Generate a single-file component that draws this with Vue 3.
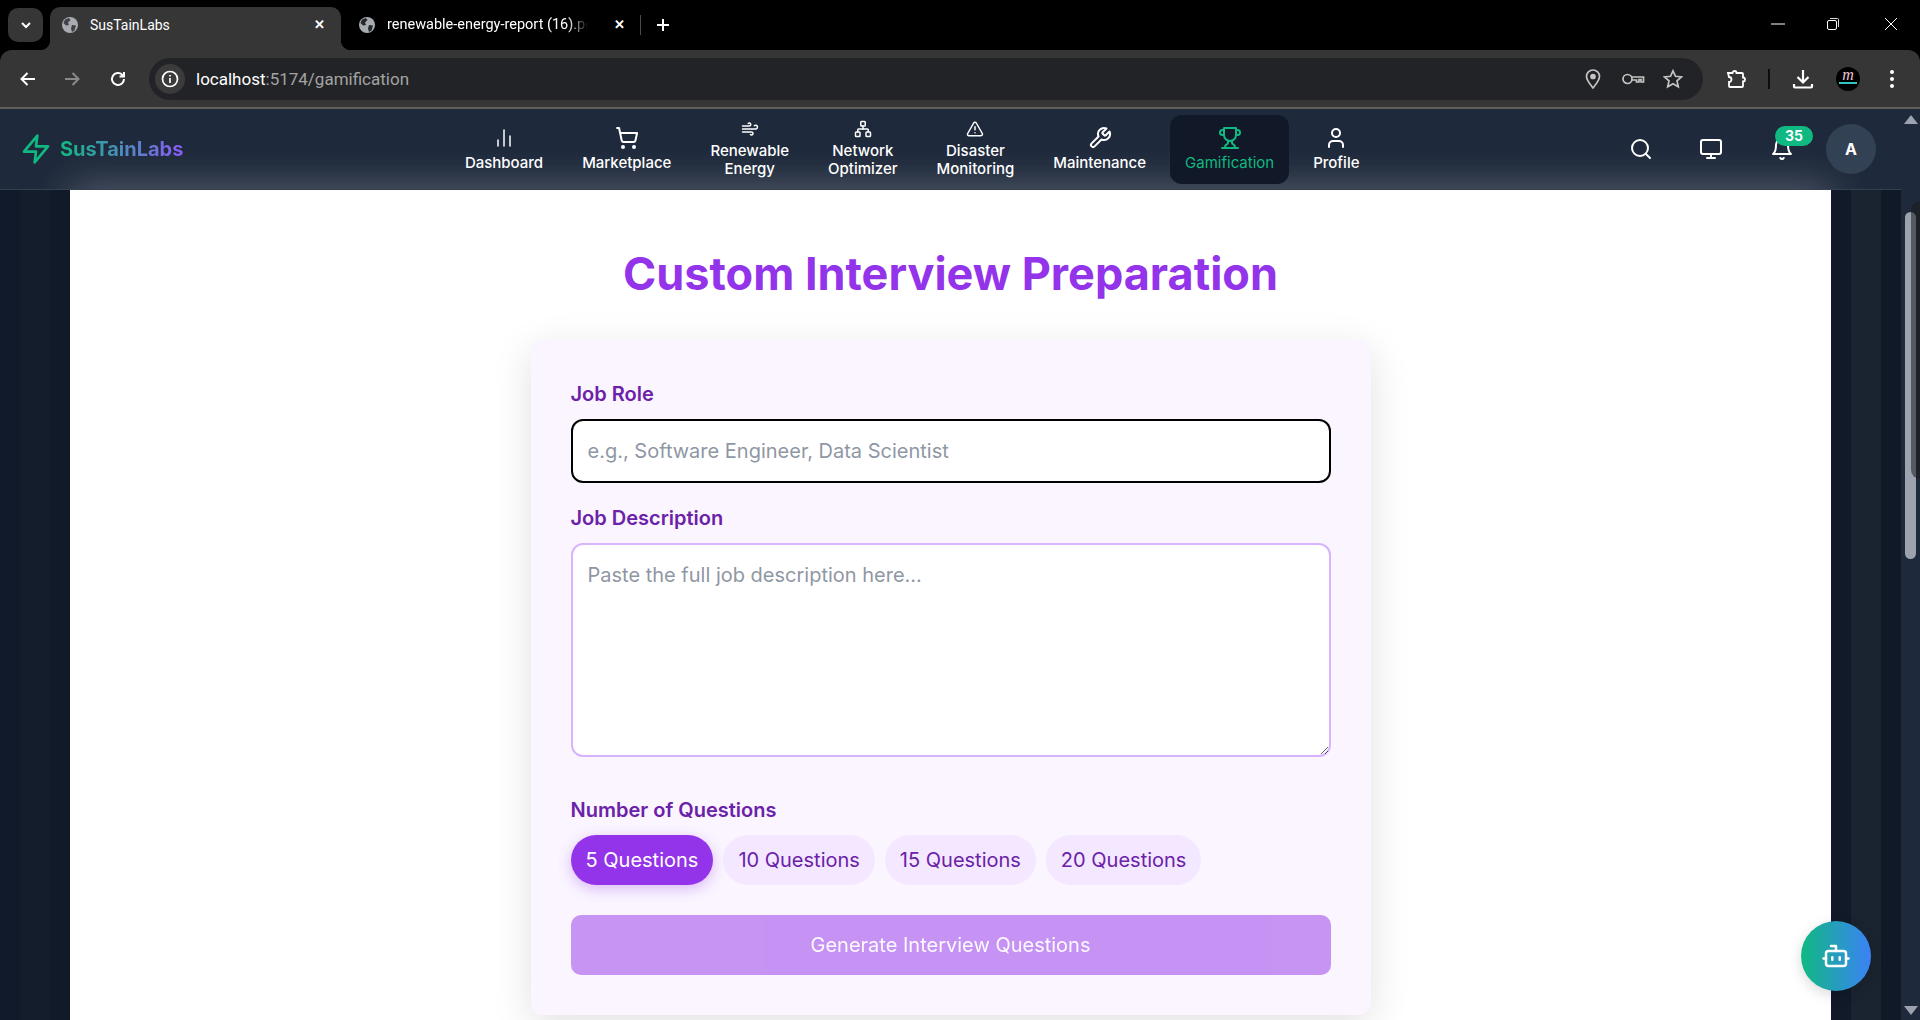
<template>
  <div class="window">
    <div class="tabstrip">
      <button class="tab-search">
        <svg width="14" height="14" viewBox="0 0 14 14"><path d="M3 5l4 4 4-4" class="chrome-line" /></svg>
      </button>
      <div class="tab active">
        <svg class="favicon" width="16" height="16" viewBox="0 0 16 16"><circle cx="8" cy="8" r="8" fill="#a8abaf" /><path d="M3 2.5 7 1l1.5 2L6 5.5 7 8 4 8.5 1.5 6zM10 8l4 .5-1.5 5-2.5 1.500-1-3.500z" fill="#3f4246" /></svg>
        <span class="tab-title">SusTainLabs</span>
        <span class="tab-close">✕</span>
      </div>
      <div class="tab">
        <svg class="favicon" width="16" height="16" viewBox="0 0 16 16"><circle cx="8" cy="8" r="8" fill="#a8abaf" /><path d="M3 2.5 7 1l1.5 2L6 5.5 7 8 4 8.5 1.5 6zM10 8l4 .5-1.5 5-2.5 1.500-1-3.500z" fill="#26282b" /></svg>
        <span class="tab-title fade">renewable-energy-report (16).pdf</span>
        <span class="tab-close">✕</span>
      </div>
      <span class="tab-divider"></span>
      <svg class="new-tab" width="16" height="16" viewBox="0 0 16 16"><path d="M8 2v12M2 8h12" class="chrome-line" /></svg>
      <div class="win-controls">
        <svg class="minimize" width="14" height="14" viewBox="0 0 14 14"><path d="M0 7h14" stroke="#fff" stroke-width="1" /></svg>
        <svg width="14" height="14" viewBox="0 0 14 14" fill="none" stroke="#ddd"><rect x="1.5" y="3.5" width="9" height="9" rx="1.5" stroke="#fff" /><path d="M4 1.5h7.5a1 1 0 0 1 1 1V10" /></svg>
        <svg width="14" height="14" viewBox="0 0 14 14"><path d="M1 1l12 12M13 1 1 13" stroke="#fff" stroke-width="1" /></svg>
      </div>
    </div>

    <div class="toolbar">
      <svg class="tool" width="20" height="20" viewBox="0 0 20 20"><path d="M17 10H4M9.5 4 3.5 10l6 6" class="chrome-line" /></svg>
      <svg class="tool" width="20" height="20" viewBox="0 0 20 20"><path d="M3 10h13M10.5 4l6 6-6 6" class="chrome-line dim" /></svg>
      <svg class="tool reload" width="20" height="20" viewBox="0 0 20 20"><path d="M16 10a6 6 0 1 1-1.8-4.3L16 7.500M16 3v4.500h-4.500" class="chrome-line" /></svg>
      <div class="omnibox">
        <span class="site-info">
          <svg width="18" height="18" viewBox="0 0 18 18" fill="none" stroke="#fff" stroke-width="1.700"><circle cx="9" cy="9" r="7.500" /><path d="M9 8v5M9 5v1.500" /></svg>
        </span>
        <span class="url"><b>localhost</b>:5174/gamification</span>
        <svg class="omni-icon" width="20" height="22" viewBox="0 0 20 22" fill="none" stroke="#c4c4c4" stroke-width="1.700"><path d="M10 20C6 15 3.500 12 3.500 8.500a6.500 6.500 0 0 1 13 0C16.500 12 14 15 10 20z" /><circle cx="10" cy="8.500" r="2" fill="#c4c4c4" /></svg>
        <svg class="omni-icon" width="24" height="16" viewBox="0 0 24 16" fill="none" stroke="#c4c4c4" stroke-width="1.700"><circle cx="6.500" cy="8" r="4.500" /><path d="M11 6h11.500v5H20V8.500h-2V11h-2.500V9H11" /></svg>
        <svg class="omni-icon" width="20" height="20" viewBox="0 0 20 20" fill="none" stroke="#c4c4c4" stroke-width="1.700"><path d="m10 1.800 2.500 5.500 6 .6-4.500 4 1.300 5.900L10 14.800 4.700 17.800 6 11.900l-4.500-4 6-.6z" /></svg>
      </div>
      <svg class="ext" width="20" height="20" viewBox="0 0 20 20" fill="none" stroke="#fff" stroke-width="1.800"><path d="M2 4h4.500a2 2 0 0 1 4 0H16a1 1 0 0 1 1 1v3.500a2 2 0 0 1 0 4V17a1 1 0 0 1-1 1H4a1 1 0 0 1-1-1v-4a2.500 2.500 0 0 0 0-5z" /></svg>
      <span class="tool-divider"></span>
      <svg class="dl" width="22" height="22" viewBox="0 0 22 22" fill="none" stroke="#fff" stroke-width="2.200"><path d="M11 2v12M5.500 9l5.500 5.500L16.500 9M2 16v2.500a1 1 0 0 0 1 1h16a1 1 0 0 0 1-1V16" /></svg>
      <span class="chrome-avatar">m</span>
      <svg class="menu-dots" width="6" height="20" viewBox="0 0 6 20" fill="#fff"><circle cx="3" cy="3" r="2" /><circle cx="3" cy="10" r="2" /><circle cx="3" cy="17" r="2" /></svg>
    </div>

    <div class="viewport">
      <div class="site">
        <nav class="navbar">
          <div class="logo">
            <svg width="32" height="32" viewBox="0 0 24 24" fill="none" stroke="#10b981" stroke-width="2" stroke-linecap="round" stroke-linejoin="round"><path d="M13 2 3 14h9l-1 8 10-12h-9z" /></svg>
            <span class="logo-text">SusTainLabs</span>
          </div>

          <div class="menu">
            <a v-for="item in navItems" :key="item.label" class="menu-item" :class="{ current: item.active }">
              <svg
                :width="item.small ? 18 : 24"
                :height="item.small ? 18 : 24"
                viewBox="0 0 24 24"
                class="line-icon"
                :class="{ thin: item.thin }"
              >
                <path v-for="d in item.paths" :key="d" :d="d" />
              </svg>
              <span class="menu-label">{{ item.label }}</span>
            </a>
          </div>

          <div class="nav-right">
            <svg width="24" height="24" viewBox="0 0 24 24" class="line-icon search"><path v-for="d in searchIcon" :key="d" :d="d" /></svg>
            <svg width="24" height="24" viewBox="0 0 24 24" class="line-icon"><path v-for="d in monitorIcon" :key="d" :d="d" /></svg>
            <div class="bell">
              <svg width="24" height="24" viewBox="0 0 24 24" class="line-icon"><path v-for="d in bellIcon" :key="d" :d="d" /></svg>
              <span class="badge">35</span>
            </div>
            <div class="avatar">A</div>
          </div>
        </nav>

        <main class="page">
          <h1 class="title">Custom Interview Preparation</h1>
          <section class="card">
            <label class="field-label">Job Role</label>
            <input class="field role" placeholder="e.g., Software Engineer, Data Scientist" />
            <label class="field-label second">Job Description</label>
            <textarea class="field desc" placeholder="Paste the full job description here..."></textarea>
            <label class="field-label third">Number of Questions</label>
            <div class="pills">
              <button
                v-for="n in questionCounts"
                :key="n"
                class="pill"
                :class="{ selected: n === count }"
                @click="count = n"
              >
                {{ n }} Questions
              </button>
            </div>
            <button class="generate" disabled>Generate Interview Questions</button>
          </section>
        </main>

        <button class="chat-fab">
          <svg width="30" height="30" viewBox="0 0 24 24" class="line-icon"><path v-for="d in botIcon" :key="d" :d="d" /></svg>
        </button>
      </div>

      <div class="scrollbar">
        <span class="arrow up"></span>
        <span class="thumb"></span>
        <span class="thumb-shade"></span>
        <span class="arrow down"></span>
      </div>
    </div>
  </div>
</template>

<script setup>
import { ref } from 'vue'

const circle = (cx, cy, r) => `M${cx - r} ${cy}a${r} ${r} 0 1 0 ${r * 2} 0a${r} ${r} 0 1 0 ${-r * 2} 0z`
const rect = (x, y, w, h, r) =>
  `M${x + r} ${y}h${w - 2 * r}a${r} ${r} 0 0 1 ${r} ${r}v${h - 2 * r}a${r} ${r} 0 0 1 ${-r} ${r}h${2 * r - w}a${r} ${r} 0 0 1 ${-r} ${-r}v${2 * r - h}a${r} ${r} 0 0 1 ${r} ${-r}z`

const navItems = [
  { label: 'Dashboard', thin: true, paths: ['M18 20V10', 'M12 20V4', 'M6 20v-6'] },
  {
    label: 'Marketplace',
    paths: [
      circle(8, 21, 1),
      circle(19, 21, 1),
      'M2.05 2.05h2l2.66 12.42a2 2 0 0 0 2 1.58h9.78a2 2 0 0 0 1.95-1.57l1.65-7.43H5.12',
    ],
  },
  {
    label: 'Renewable Energy',
    small: true,
    paths: ['M17.7 7.7a2.5 2.5 0 1 1 1.8 4.3H2', 'M9.6 4.6A2 2 0 1 1 11 8H2', 'M12.6 19.4A2 2 0 1 0 14 16H2'],
  },
  {
    label: 'Network Optimizer',
    small: true,
    paths: [
      rect(16, 16, 6, 6, 1),
      rect(2, 16, 6, 6, 1),
      rect(9, 2, 6, 6, 1),
      'M5 16v-3a1 1 0 0 1 1-1h12a1 1 0 0 1 1 1v3',
      'M12 12V8',
    ],
  },
  {
    label: 'Disaster Monitoring',
    small: true,
    paths: ['m21.73 18-8-14a2 2 0 0 0-3.48 0l-8 14A2 2 0 0 0 4 21h16a2 2 0 0 0 1.73-3', 'M12 9v4', 'M12 17h.01'],
  },
  {
    label: 'Maintenance',
    paths: [
      'M14.7 6.3a1 1 0 0 0 0 1.4l1.6 1.6a1 1 0 0 0 1.4 0l3.77-3.77a6 6 0 0 1-7.94 7.94l-6.91 6.91a2.12 2.12 0 0 1-3-3l6.91-6.91a6 6 0 0 1 7.94-7.94l-3.76 3.76z',
    ],
  },
  {
    label: 'Gamification',
    active: true,
    paths: [
      'M6 9H4.5a2.5 2.5 0 0 1 0-5H6',
      'M18 9h1.5a2.5 2.5 0 0 0 0-5H18',
      'M4 22h16',
      'M10 14.66V17c0 .55-.47.98-.97 1.21C7.85 18.75 7 20.24 7 22',
      'M14 14.66V17c0 .55.47.98.97 1.21C16.15 18.75 17 20.24 17 22',
      'M18 2H6v7a6 6 0 0 0 12 0V2Z',
    ],
  },
  { label: 'Profile', paths: ['M19 21v-2a4 4 0 0 0-4-4H9a4 4 0 0 0-4 4v2', circle(12, 7, 4)] },
]

const searchIcon = [circle(11, 11, 8), 'm21 21-4.3-4.3']
const monitorIcon = [rect(2, 3, 20, 14, 2), 'M8 21h8', 'M12 17v4']
const bellIcon = ['M6 8a6 6 0 0 1 12 0c0 7 3 9 3 9H3s3-2 3-9', 'M10.3 21a1.94 1.94 0 0 0 3.4 0']
const botIcon = ['M12 8V4H8', rect(4, 8, 16, 12, 2), 'M2 14h2', 'M20 14h2', 'M15 13v2', 'M9 13v2']

const questionCounts = [5, 10, 15, 20]
const count = ref(5)
</script>

<style>
html,
body {
  margin: 0;
  background: #000;
  overflow: hidden;
}
</style>

<style scoped>
.window {
  height: 1020px;
  display: flex;
  flex-direction: column;
  overflow: hidden;
  font-family: Inter, 'Liberation Sans', sans-serif;
}

.chrome-line {
  fill: none;
  stroke: #fff;
  stroke-width: 2;
}

.chrome-line.dim {
  stroke: #8a8a8a;
}

/* browser tab strip */
.tabstrip {
  height: 50px;
  flex: none;
  background: #000;
  display: flex;
  align-items: flex-end;
  padding-left: 8px;
  font-family: Roboto, 'Liberation Sans', sans-serif;
  color: #fff;
}

.tab-search {
  width: 35px;
  height: 34px;
  margin-right: 7px;
  margin-bottom: 8px;
  border: 0;
  padding: 0;
  border-radius: 10px;
  background: #363636;
  display: flex;
  align-items: center;
  justify-content: center;
}

.tab {
  width: 291px;
  height: 43px;
  box-sizing: border-box;
  display: flex;
  align-items: center;
  padding: 0 14px 8px 12px;
  border-radius: 10px 10px 0 0;
  font-size: 14px;
  position: relative;
}

.tab.active {
  background: #363636;
}

.tab.active::before,
.tab.active::after {
  content: '';
  position: absolute;
  bottom: 0;
  width: 10px;
  height: 10px;
}

.tab.active::before {
  left: -10px;
  background: radial-gradient(circle at 0 0, transparent 10px, #363636 10.5px);
}

.tab.active::after {
  right: -10px;
  background: radial-gradient(circle at 100% 0, transparent 10px, #363636 10.5px);
}

.tab + .tab {
  width: 300px;
  padding-left: 18px;
}

.tab-title {
  margin-left: 12px;
  flex: 1;
  white-space: nowrap;
  overflow: hidden;
}

.tab-title.fade {
  -webkit-mask-image: linear-gradient(90deg, #000 90%, transparent);
  mask-image: linear-gradient(90deg, #000 90%, transparent);
  font-size: 14.500px;
  margin-right: 18px;
}

.tab-close {
  font-size: 13px;
  line-height: 1;
  font-weight: 700;
  margin-left: 8px;
  margin-right: 2px;
}

.tab-divider {
  width: 1px;
  height: 20px;
  background: #4b4b4b;
  margin: 0 0 15px -1px;
}

.new-tab {
  margin: 0 0 17px 14px;
}

.win-controls {
  margin-left: auto;
  display: flex;
  gap: 44px;
  padding-right: 22px;
  align-self: flex-start;
  padding-top: 17px;
}

.minimize {
  margin-right: -3px;
}

/* browser toolbar */
.toolbar {
  height: 59px;
  flex: none;
  box-sizing: border-box;
  background: #363636;
  border-bottom: 2px solid #5f5f59;
  border-radius: 12px 12px 0 0;
  display: flex;
  align-items: center;
  padding-left: 18px;
}

.tool {
  margin-right: 24px;
}

.tool.reload {
  margin-left: 2px;
  margin-right: 21px;
}

.omnibox {
  width: 1554px;
  height: 42px;
  border-radius: 21px;
  background: #222326;
  display: flex;
  align-items: center;
  color: #a3a3a3;
  font-family: Roboto, 'Liberation Sans', sans-serif;
  font-size: 17px;
}

.site-info {
  width: 30px;
  height: 30px;
  margin-left: 6px;
  border-radius: 50%;
  background: #3b3b3b;
  display: flex;
  align-items: center;
  justify-content: center;
}

.url {
  margin-left: 11px;
  flex: 1;
}

.url b {
  font-weight: 400;
  color: #fff;
}

.omni-icon {
  margin-right: 18px;
}

.omni-icon:last-child {
  margin-right: 20px;
}

.ext {
  margin-left: 23px;
}

.tool-divider {
  width: 2px;
  height: 20px;
  background: #0d0d0d;
  margin: 0 22px 0 22px;
}

.chrome-avatar {
  width: 24px;
  height: 24px;
  margin-left: 22px;
  border-radius: 50%;
  background: #000;
  color: #f3c6d4;
  font-family: 'Liberation Serif', serif;
  font-style: italic;
  font-size: 16px;
  line-height: 15px;
  text-align: center;
  position: relative;
  overflow: hidden;
}

.chrome-avatar::after {
  content: '';
  position: absolute;
  left: 3px;
  right: 3px;
  top: 15px;
  height: 2px;
  background: #2fc4c0;
}

.menu-dots {
  margin-left: 29px;
}

/* page */
.viewport {
  flex: 1;
  min-height: 0;
  display: flex;
  position: relative;
}

.site {
  flex: 1;
  min-width: 0;
  display: flex;
  flex-direction: column;
  position: relative;
  background: linear-gradient(
    90deg,
    #111a2a 0 20px,
    #141d2b 20px 50px,
    #121a2a 50px 1851px,
    #1a2430 1851px 1881px,
    #111827 1881px
  );
}

.navbar {
  height: 81px;
  flex: none;
  box-sizing: border-box;
  display: flex;
  align-items: center;
  justify-content: space-between;
  padding: 0 25px 0 20px;
  background: #1e293b;
  border-bottom: 1px solid #34404f;
  position: relative;
  overflow: hidden;
  color: #fff;
}

.navbar::before {
  content: '';
  position: absolute;
  left: 70px;
  right: 70px;
  bottom: -34px;
  height: 34px;
  background: rgba(255, 255, 255, 0.3);
  filter: blur(20px);
}

.line-icon {
  fill: none;
  stroke: currentColor;
  stroke-width: 2;
  stroke-linecap: round;
  stroke-linejoin: round;
  flex: none;
}

.line-icon.thin {
  stroke-width: 1.500;
}

.logo,
.menu,
.nav-right {
  position: relative;
  display: flex;
  align-items: center;
}

.logo {
  gap: 8px;
  margin-top: -1px;
}

.logo-text {
  font-size: 20px;
  font-weight: 700;
  background: linear-gradient(90deg, #10b981, #8b5cf6);
  -webkit-background-clip: text;
  background-clip: text;
  color: transparent;
}

.menu {
  gap: 9px;
  margin-left: 12px;
}

.menu-item {
  height: 69px;
  box-sizing: border-box;
  padding: 0 15px;
  border-radius: 12px;
  display: flex;
  flex-direction: column;
  align-items: center;
  justify-content: center;
  gap: 4px;
  color: #fff;
}

.menu-label {
  font-size: 15px;
  font-weight: 500;
  line-height: 18px;
  text-align: center;
  width: min-content;
}

.menu-item.current {
  background: #111827;
  color: #10b981;
}

.menu-item.current .menu-label {
  font-weight: 400;
}

.nav-right {
  gap: 47px;
}

.nav-right .search {
  margin-right: -1px;
}

.bell {
  position: relative;
  height: 24px;
}

.badge {
  position: absolute;
  left: 5px;
  top: -11px;
  width: 38px;
  height: 20px;
  border-radius: 10px;
  background: #10b981;
  color: #fff;
  font-size: 14px;
  font-weight: 700;
  line-height: 20px;
  text-align: center;
}

.avatar {
  width: 50px;
  height: 50px;
  margin-left: -15px;
  border-radius: 50%;
  background: #334155;
  font-size: 16px;
  font-weight: 700;
  line-height: 50px;
  text-align: center;
}

.page {
  flex: 1;
  min-height: 0;
  margin: 0 70px;
  background: #fff;
  display: flex;
  flex-direction: column;
  align-items: center;
  overflow: hidden;
}

.title {
  margin: 0;
  padding-top: 56px;
  height: 94px;
  box-sizing: border-box;
  font-size: 45px;
  font-weight: 700;
  line-height: 56px;
  color: #9333ea;
}

.card {
  width: 840px;
  flex: none;
  box-sizing: border-box;
  height: 675px;
  margin-top: 56px;
  padding: 40px;
  border-radius: 12px;
  background: #faf5ff;
  box-shadow: 0 10px 40px rgba(0, 0, 0, 0.12);
  display: flex;
  flex-direction: column;
}

.field-label {
  font-size: 20px;
  font-weight: 600;
  line-height: 28px;
  color: #6b21a8;
  margin-bottom: 11px;
}

.field-label.second {
  margin-top: 21px;
}

.field-label.third {
  margin-top: 39px;
}

.field {
  width: 100%;
  box-sizing: border-box;
  padding: 15px;
  border: 2px solid #d8b4fe;
  border-radius: 12px;
  background: #fff;
  font-family: inherit;
  font-size: 20px;
  outline: none;
}

.field::placeholder {
  color: #8f97a4;
}

.role {
  height: 64px;
  border-color: #000;
  flex: none;
}

.desc {
  height: 214px;
  flex: none;
  resize: vertical;
  padding-top: 18px;
  line-height: 24px;
}

.pills {
  display: flex;
  gap: 10px;
}

.pill {
  height: 50px;
  padding: 0 15px;
  border: 0;
  border-radius: 25px;
  background: #f3e8ff;
  color: #6b21a8;
  font-family: inherit;
  font-size: 20px;
}

.pill.selected {
  background: #9333ea;
  color: #fff;
  box-shadow: 0 4px 14px rgba(147, 51, 234, 0.3);
}

.generate {
  height: 60px;
  flex: none;
  margin-top: 30px;
  border: 0;
  border-radius: 10px;
  background: #9333ea;
  opacity: 0.5;
  color: #fff;
  font-family: inherit;
  font-size: 20px;
  font-weight: 400;
}

.chat-fab {
  position: absolute;
  left: 1801px;
  top: 812px;
  width: 70px;
  height: 70px;
  border: 0;
  border-radius: 50%;
  background: linear-gradient(90deg, #10b981, #3b82f6);
  color: #fff;
  display: flex;
  align-items: center;
  justify-content: center;
  box-shadow: 0 4px 14px rgba(0, 0, 0, 0.15);
}

/* page scrollbar */
.scrollbar {
  width: 19px;
  flex: none;
  background: #1e293b;
  position: relative;
}

.thumb {
  position: absolute;
  left: 4px;
  top: 103px;
  width: 11px;
  height: 347px;
  border-radius: 6px;
  background: #9ca3af;
}

.thumb-shade {
  position: absolute;
  left: 10px;
  top: 92px;
  width: 12px;
  height: 278px;
  border-radius: 9px 0 0 9px;
  background: rgba(30, 30, 30, 0.55);
}

.arrow {
  position: absolute;
  left: 3px;
  width: 0;
  height: 0;
  border-left: 7px solid transparent;
  border-right: 7px solid transparent;
}

.arrow.up {
  top: 6px;
  border-bottom: 9px solid #9ca3af;
}

.arrow.down {
  bottom: 5px;
  border-top: 9px solid #9ca3af;
}
</style>
